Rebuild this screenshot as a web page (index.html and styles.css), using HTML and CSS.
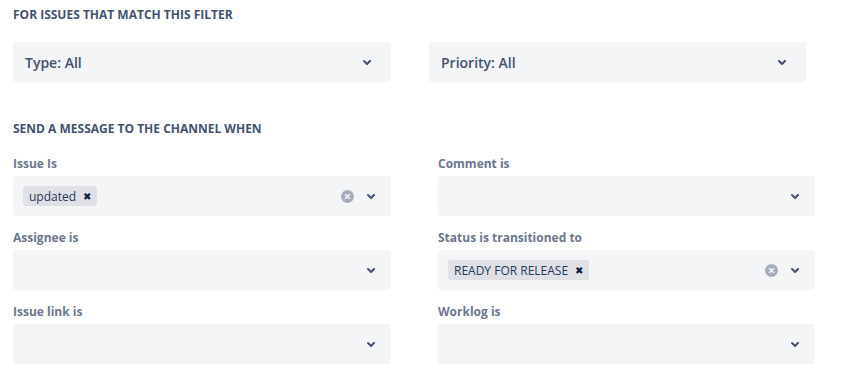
FILE: index.html
```html
<!DOCTYPE html>
<html lang="en">
<head>
<meta charset="UTF-8" />
<title>Channel notifications</title>
<link rel="stylesheet" href="styles.css">
</head>
<body>

<section class="filter">
  <h2 class="section-title">For issues that match this filter</h2>
  <div class="filter-row">
    <div class="select big">
      <span class="value">Type: All</span>
      <span class="indicators">
        <svg class="chevron" viewBox="0 0 24 24"><path d="M8.3 10.3a1 1 0 0 1 1.4 0L12 12.6l2.3-2.3a1 1 0 1 1 1.4 1.4l-3 3a1 1 0 0 1-1.4 0l-3-3a1 1 0 0 1 0-1.4z"/></svg>
      </span>
    </div>
    <div class="select big">
      <span class="value">Priority: All</span>
      <span class="indicators">
        <svg class="chevron" viewBox="0 0 24 24"><path d="M8.3 10.3a1 1 0 0 1 1.4 0L12 12.6l2.3-2.3a1 1 0 1 1 1.4 1.4l-3 3a1 1 0 0 1-1.4 0l-3-3a1 1 0 0 1 0-1.4z"/></svg>
      </span>
    </div>
  </div>
</section>

<section class="events">
  <h2 class="section-title">Send a message to the channel when</h2>
  <div class="event-grid">

    <div class="field">
      <label>Issue Is</label>
      <div class="select">
        <span class="chips">
          <span class="chip">updated <span class="chip-x">&#x2716;</span></span>
        </span>
        <span class="indicators">
          <span class="clear">&times;</span>
          <svg class="chevron" viewBox="0 0 24 24"><path d="M8.3 10.3a1 1 0 0 1 1.4 0L12 12.6l2.3-2.3a1 1 0 1 1 1.4 1.4l-3 3a1 1 0 0 1-1.4 0l-3-3a1 1 0 0 1 0-1.4z"/></svg>
        </span>
      </div>
    </div>

    <div class="field">
      <label>Comment is</label>
      <div class="select">
        <span class="chips"></span>
        <span class="indicators">
          <svg class="chevron" viewBox="0 0 24 24"><path d="M8.3 10.3a1 1 0 0 1 1.4 0L12 12.6l2.3-2.3a1 1 0 1 1 1.4 1.4l-3 3a1 1 0 0 1-1.4 0l-3-3a1 1 0 0 1 0-1.4z"/></svg>
        </span>
      </div>
    </div>

    <div class="field">
      <label>Assignee is</label>
      <div class="select">
        <span class="chips"></span>
        <span class="indicators">
          <svg class="chevron" viewBox="0 0 24 24"><path d="M8.3 10.3a1 1 0 0 1 1.4 0L12 12.6l2.3-2.3a1 1 0 1 1 1.4 1.4l-3 3a1 1 0 0 1-1.4 0l-3-3a1 1 0 0 1 0-1.4z"/></svg>
        </span>
      </div>
    </div>

    <div class="field">
      <label>Status is transitioned to</label>
      <div class="select">
        <span class="chips">
          <span class="chip">READY FOR RELEASE <span class="chip-x">&#x2716;</span></span>
        </span>
        <span class="indicators">
          <span class="clear">&times;</span>
          <svg class="chevron" viewBox="0 0 24 24"><path d="M8.3 10.3a1 1 0 0 1 1.4 0L12 12.6l2.3-2.3a1 1 0 1 1 1.4 1.4l-3 3a1 1 0 0 1-1.4 0l-3-3a1 1 0 0 1 0-1.4z"/></svg>
        </span>
      </div>
    </div>

    <div class="field">
      <label>Issue link is</label>
      <div class="select">
        <span class="chips"></span>
        <span class="indicators">
          <svg class="chevron" viewBox="0 0 24 24"><path d="M8.3 10.3a1 1 0 0 1 1.4 0L12 12.6l2.3-2.3a1 1 0 1 1 1.4 1.4l-3 3a1 1 0 0 1-1.4 0l-3-3a1 1 0 0 1 0-1.4z"/></svg>
        </span>
      </div>
    </div>

    <div class="field">
      <label>Worklog is</label>
      <div class="select">
        <span class="chips"></span>
        <span class="indicators">
          <svg class="chevron" viewBox="0 0 24 24"><path d="M8.3 10.3a1 1 0 0 1 1.4 0L12 12.6l2.3-2.3a1 1 0 1 1 1.4 1.4l-3 3a1 1 0 0 1-1.4 0l-3-3a1 1 0 0 1 0-1.4z"/></svg>
        </span>
      </div>
    </div>

  </div>
</section>

</body>
</html>
```

FILE: styles.css
```css
body {
  font-family: 'Open Sans', 'Noto Sans', sans-serif;
  background: #fff;
  color: #42526e;
  margin: 0;
  padding: 7px 13px 0;
}
.section-title {
  font-size: 12px;
  line-height: 16px;
  font-weight: 700;
  text-transform: uppercase;
  color: #42526e;
  margin: 0;
}
.filter-row {
  display: flex;
  gap: 38px;
  margin-top: 19px;
}
.filter-row .select {
  width: 378px;
}
.filter-row .select + .select {
  width: 377px;
}
.select {
  box-sizing: border-box;
  height: 40px;
  background: #f4f5f7;
  border-radius: 3px;
  display: flex;
  align-items: center;
  justify-content: space-between;
  padding: 0 8px 0 10px;
}
.select.big {
  padding: 0 12px;
}
.select .value {
  font-size: 14px;
  font-weight: 600;
  color: #42526e;
}
.indicators {
  display: flex;
  align-items: center;
  gap: 5px;
}
.chevron {
  width: 24px;
  height: 24px;
  fill: #42526e;
  display: block;
}
.clear {
  width: 13px;
  height: 13px;
  border-radius: 50%;
  background: #a5adba;
  color: #f4f5f7;
  font-size: 13px;
  font-weight: 700;
  line-height: 13px;
  text-align: center;
}
.events {
  margin-top: 39px;
}
.event-grid {
  display: grid;
  grid-template-columns: 378px 377px;
  column-gap: 47px;
  row-gap: 14px;
  margin-top: 19px;
}
.field label {
  display: block;
  font-size: 12px;
  line-height: 16px;
  font-weight: 700;
  color: #6b778c;
  margin-bottom: 4px;
}
.chips {
  display: flex;
}
.chip {
  display: flex;
  align-items: center;
  height: 20px;
  padding: 0 6px;
  background: #dfe1e6;
  border-radius: 3px;
  font-size: 12px;
  color: #253858;
}
.chip-x {
  font-size: 10px;
  margin-left: 7px;
  color: #091e42;
}
```
